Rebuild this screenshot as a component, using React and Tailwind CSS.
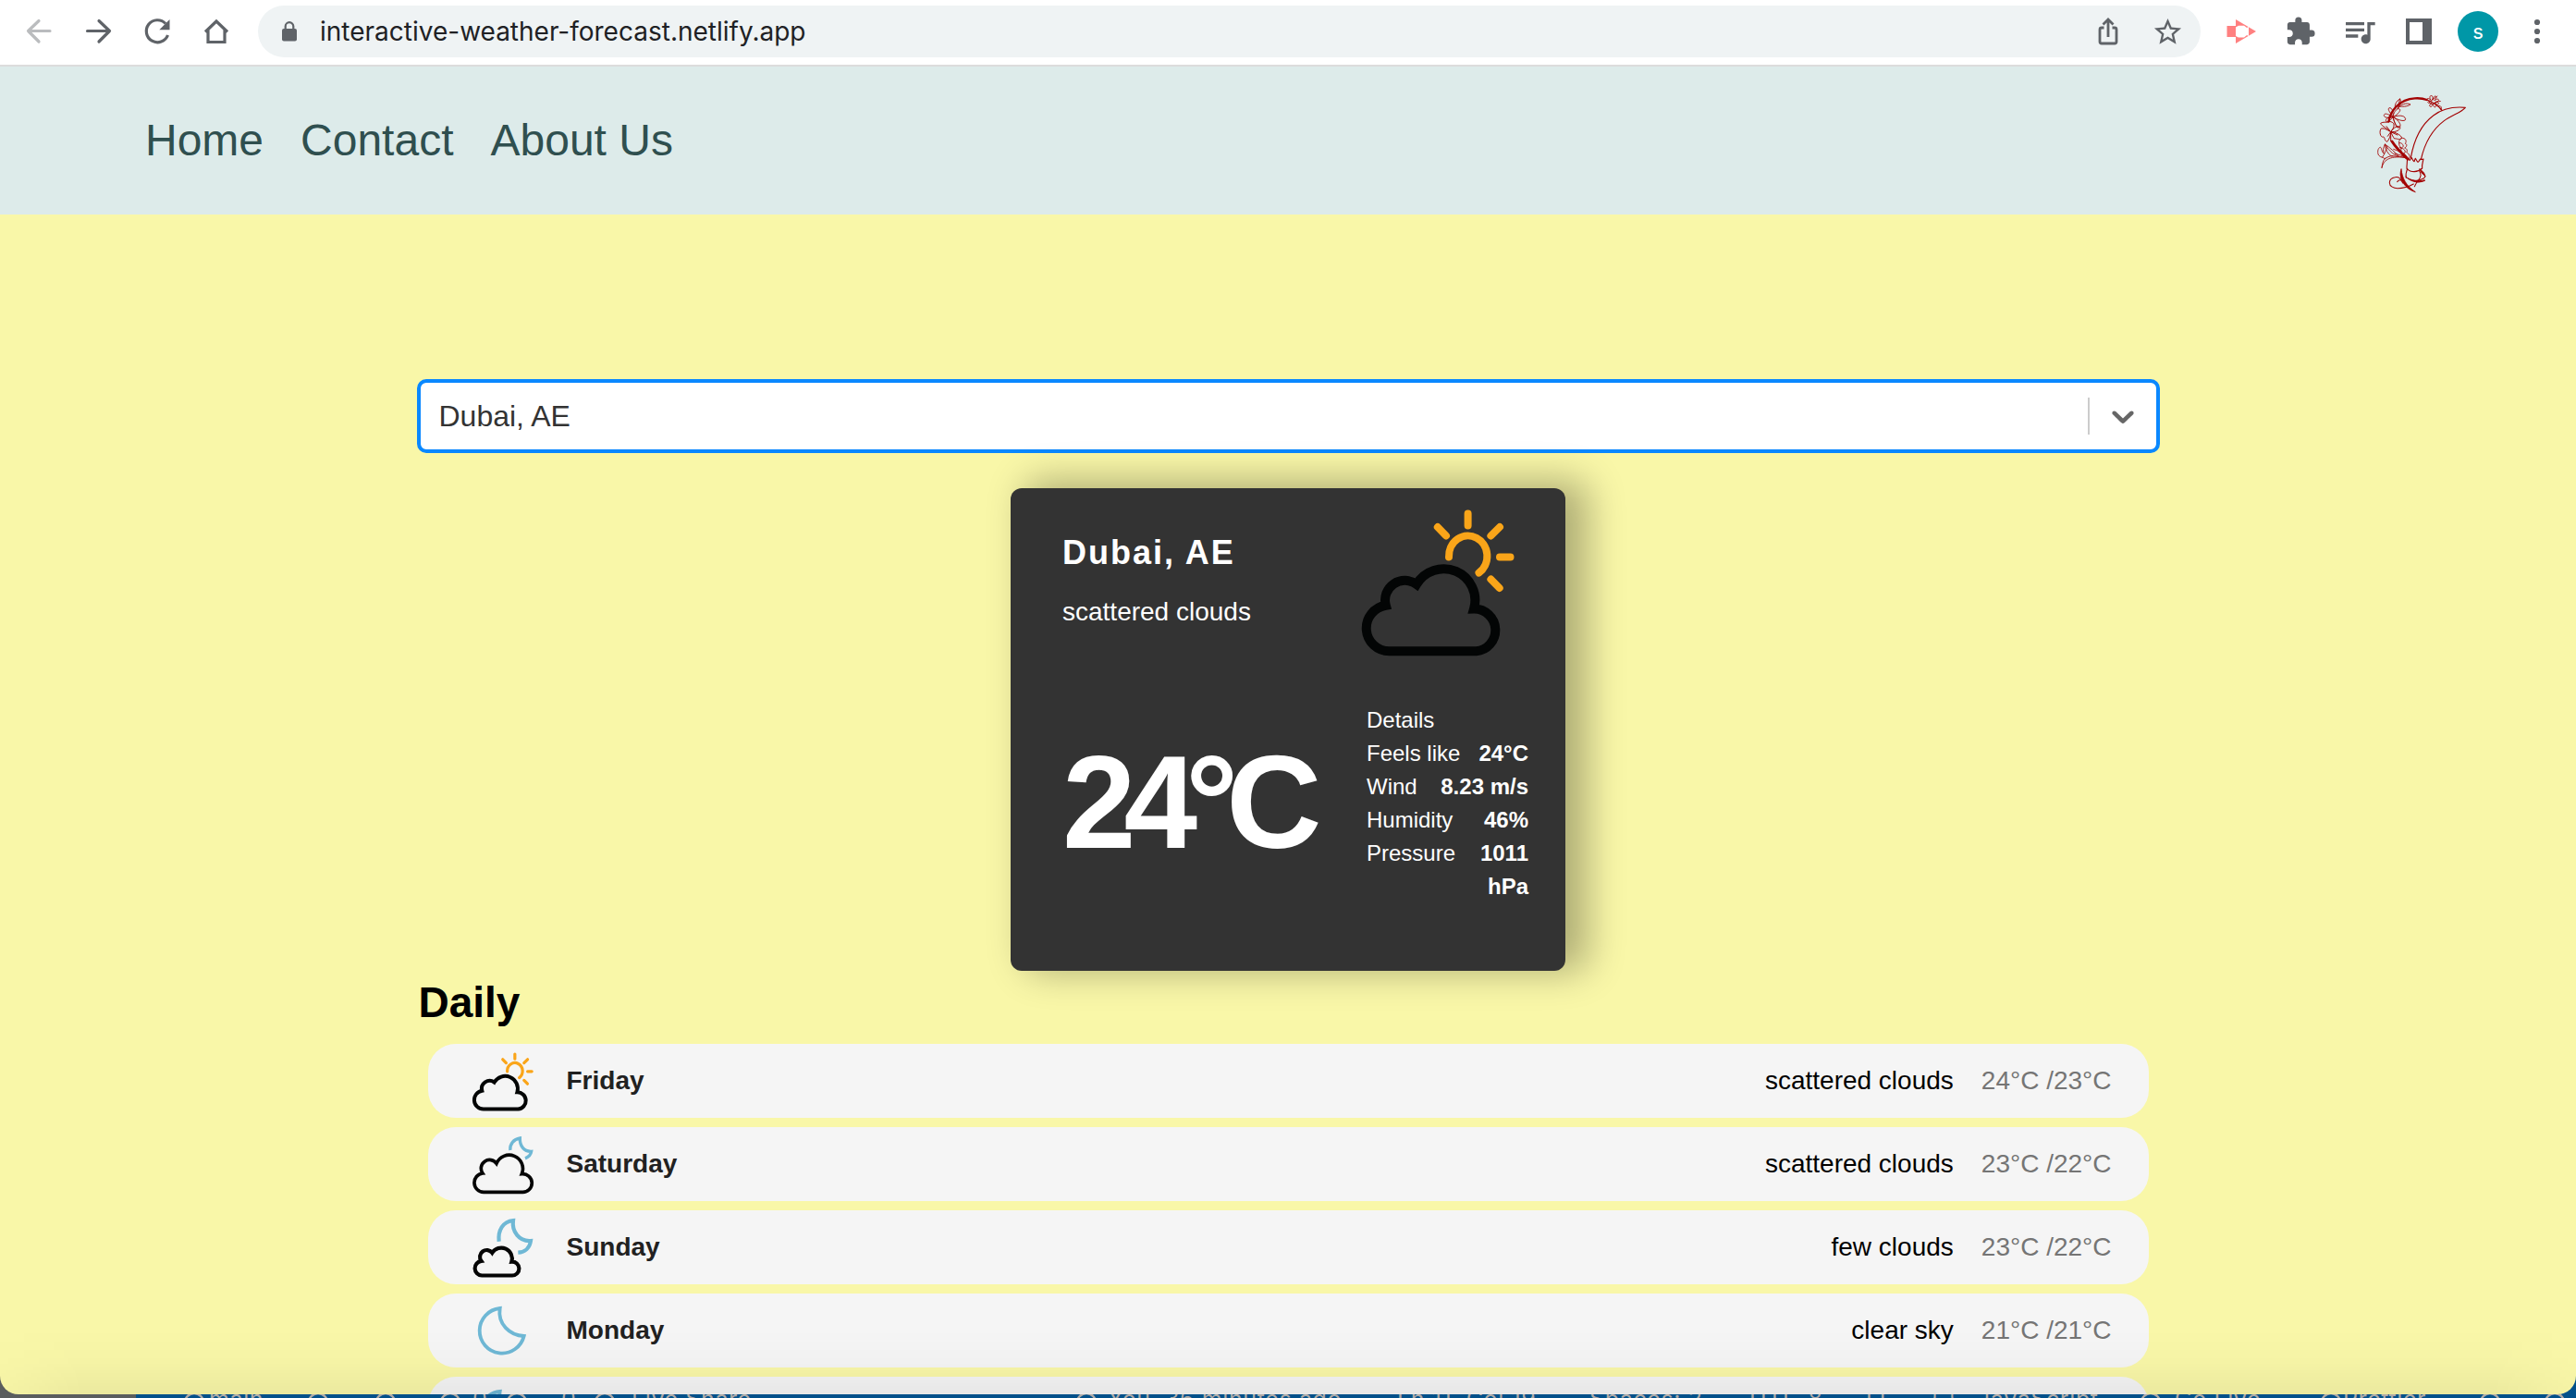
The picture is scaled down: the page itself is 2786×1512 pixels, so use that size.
import React from "react";
import { MdStarBorder, MdExtension, MdQueueMusic } from "react-icons/md";

const days = [
  { name: "Friday", icon: "sunCloud", desc: "scattered clouds", temp: "24°C /23°C" },
  { name: "Saturday", icon: "moonCloud", desc: "scattered clouds", temp: "23°C /22°C" },
  { name: "Sunday", icon: "moonFewClouds", desc: "few clouds", temp: "23°C /22°C" },
  { name: "Monday", icon: "moon", desc: "clear sky", temp: "21°C /21°C" },
];

function SunCloud({ className }) {
  return (
    <svg viewBox="373 28 200 200" className={className} fill="none">
      <g stroke="#faa519" strokeWidth="8" strokeLinecap="round">
        <path d="M487 102.5A20.700 22 0 1 1 519.500 119.500" />
        <path d="M507.600 55.500v13M542 70l-9.600 9.500M474.800 70l9.200 9.500M542 102.500H553.500M532.400 126.500l9.300 9.500" />
      </g>
      <path
        d="M422.500 204.300A24.900 24.900 0 0 1 418.800 154.800A21.300 21.300 0 0 1 452 132A34 34 0 0 1 514 158.600A22.900 22.900 0 0 1 516.500 204.300Z"
        stroke="#030505"
        strokeWidth="10"
      />
    </svg>
  );
}

function MoonCloud({ className }) {
  return (
    <svg viewBox="189 537 240 240" className={className} fill="none">
      <path d="M335.500 612C333.500 592 347 576 367 573C366 598 380 617 404 616C402.500 626 396 634 384 638.500" stroke="#6fb8d5" strokeWidth="10" />
      <path
        d="M249 748A30.600 30.600 0 0 1 246 687A27 27 0 0 1 291 655A44 44 0 0 1 373 689A29.600 29.600 0 1 1 375 748Z"
        stroke="#050505"
        strokeWidth="11"
      />
    </svg>
  );
}

function MoonFewClouds({ className }) {
  return (
    <svg viewBox="189 807 240 240" className={className} fill="none">
      <path d="M299 908C295 872 312 843 345 840C340 876 365 909 402 906C399 928 384 943 361 944" stroke="#6fb8d5" strokeWidth="12.500" />
      <path
        d="M243.500 1018.500A23.600 23.600 0 0 1 241.500 971.500A21 21 0 0 1 277 945A35 35 0 0 1 340 974A22.300 22.300 0 1 1 341 1018.500Z"
        stroke="#050505"
        strokeWidth="12.500"
      />
    </svg>
  );
}

function Moon({ className }) {
  return (
    <svg viewBox="189 1077 240 240" className={className} fill="none">
      <path d="M302 1125A73 73 0 1 0 380 1215C334 1213 294 1176 302 1125Z" stroke="#6fb8d5" strokeWidth="11.500" />
    </svg>
  );
}

const icons = { sunCloud: SunCloud, moonCloud: MoonCloud, moonFewClouds: MoonFewClouds, moon: Moon };

function FloralLogo() {
  return (
    <svg viewBox="0 0 480 420" className="h-[140px] w-[160px]" fill="none" stroke="#a30303" strokeLinecap="round" strokeLinejoin="round">
      <path strokeWidth="3.400" d="M202 272C212 215 235 165 275 135C305 112 345 106 379 109C366 125 335 133 310 152C270 182 246 228 235 278" />
      <path strokeWidth="7" d="M130 155C135 120 165 82 215 79C230 78 242 79 254 84" />
      <path strokeWidth="4" d="M254 84C275 92 293 104 303 118" />
      <path strokeWidth="8.500" d="M141 219C153 238 172 257 192 276" />
      <path strokeWidth="2.600" d="M252 84c4-8 10-4 14 0c-4-8-2-16 4-13c6 2 2 9 3 14c2-9 7-16 11-12c4 3-4 9-5 14c6-7 13-7 14-2c0 4-8 4-13 7c8-2 14 0 12 5c-3 5-9 0-14-2c5 4 8 9 4 12c-5 3-7-6-9-11c0 7-5 13-9 9c-4-3 3-8 5-12c-6 3-14 2-11-3c2-4 7-2 10-2M262 92c14-14 18-12 26-20M268 98c12 0 24-12 30-10M290 104c10-4 14 6 10 12" />
      <path strokeWidth="2.700" d="M152 114c-5-14 4-26 15-34c4 12 2 22-8 32c12-14 28-20 42-13c-12 8-26 7-38 6M160 112c4-10 3-20 6-30" />
      <path strokeWidth="2.700" d="M144 140c-12-8-27-16-29-6c-1 8 16 10 29 6c-16-2-26 6-22 14c6 4 16-6 22-14c-6-12-20-26-12-30c10-2 14 16 12 30c2-14 10-28 20-27c10 4-6 20-20 27c14-6 38-8 41 6c0 12-28 2-41-6c12 4 30 24 22 32c-10 5-18-18-22-32c4 14 10 36 18 35" />
      <path strokeWidth="2.900" d="M137 188c-8-10-30-18-33-28c8-6 20-2 24-4c4-4 16 0 19 6c2 10-4 18-10 26c8-14 24-22 30-16c4 8-14 18-30 16c14 0 34 10 36 20c-8 8-18 0-24 2c-4-4-8-14-12-22c0 10-4 24-12 32c-10-4-6-14-12-16c-10 4-14-18-8-26c6-4 20 2 32 10M137 188l-14-18M137 188l22 10M137 188l-10 14M137 188v30" />
      <path strokeWidth="2.600" d="M118 228c-5 10-8 24-2 32c-10-8-8-20-12-22c-10 0-11 20-6 26c6 8 14 4 20 12c6-6 14-10 26-10M118 228c16 10 34 28 46 40c-14-4-30-14-46-40c2 16 8 30 20 38c20 2 40 2 54 8M108 304c6-28 30-40 80-32M108 304c2-16 4-24 12-32M124 236c-2 14-8 24-14 34M146 244c16 4 34 16 44 28M150 258c14 4 28 8 40 16" />
      <path strokeWidth="2.600" d="M164 224c-2-10 6-16 12-16c12 2 12 12 8 18c8 2 4 12-2 14c8 2 10 10 6 14c8 4 14 14 8 22c-8-4-16-10-18-18c-10-4-8-14-6-18c-8-4-8-12-8-16c8-2 12 4 14 10c-4 8-10 8-12 4c6 4 14 2 18 14c-2 8-8 8-12 4c8 4 16 4 18 18c-8 0-12-6-16-12" />
      <path strokeWidth="3.400" d="M190 270c4 8 6 10 9 10c2-4 4-6 6-8c2 4 4 10 8 12c2-4 2-7 4-10c4 4 4 10 8 12c4-2 4-6 8-10c4 2 6 2 10 0c-2 10-6 20-4 30c-6 6-16 10-26 11c-10 0-18-4-24-10c-1-12 3-22 1-37z" />
      <path strokeWidth="3.200" d="M191 307c-4 10-6 20-4 30M230 315c6 10 6 16-2 28c-6 6-10 14-14 22" />
      <path fill="#a30303" strokeWidth="2.500" d="M171 309c3 30 16 54 46 74c-30-8-58-42-46-74z" />
      <path fill="#a30303" strokeWidth="2.500" d="M186 334c16 12 36 14 62 12c-22 10-46 4-62-12zM231 309c8 6 16 10 18 24c-6-8-14-10-18-24z" />
      <path strokeWidth="3.200" d="M249 332c-2 8-14 12-28 14M246 344c-12 10-24 6-32 4" />
      <path strokeWidth="3.200" d="M173 349c-4-10-12-16-22-14c-12 2-18 10-18 18c0 12 14 18 26 18c18 0 34-4 52-14M158 350c6-8 14-8 18 4" />
    </svg>
  );
}

function ToolIcon({ children, className = "" }) {
  return <div className={`flex h-10 w-10 shrink-0 items-center justify-center text-[#5f6368] ${className}`}>{children}</div>;
}

function BrowserBar() {
  return (
    <div className="flex h-[72px] items-start border-b-2 border-[#dcdcdc] bg-white pl-[22px] pt-[6px] font-[Inter,sans-serif]">
      <div className="flex h-14 w-[257px] items-center gap-6">
        <ToolIcon>
          <svg viewBox="0 0 40 40" className="size-10" fill="none" stroke="#babcbe" strokeWidth="3.2" strokeLinecap="round" strokeLinejoin="round">
            <path d="M32 19.500H9M20 8.500L8.500 19.500L20 31" />
          </svg>
        </ToolIcon>
        <ToolIcon>
          <svg viewBox="0 0 40 40" className="size-10" fill="none" stroke="#5f6368" strokeWidth="3.2" strokeLinecap="round" strokeLinejoin="round">
            <path d="M8.500 19.500H32M21 8.500L32.500 19.500L21 31" />
          </svg>
        </ToolIcon>
        <ToolIcon>
          <svg viewBox="0 0 40 40" className="size-10" fill="none">
            <path d="M31.500 24A12 12 0 1 1 29 11.500" stroke="#5f6368" strokeWidth="3.200" />
            <path d="M33.500 7V18.200H22.300Z" fill="#5f6368" />
          </svg>
        </ToolIcon>
        <ToolIcon>
          <svg viewBox="0 0 40 40" className="size-10" fill="none" stroke="#5f6368" strokeWidth="3.2">
            <path d="M8 20.500L20 9L32 20.500M11 18.500V31.500H29V18.500" />
          </svg>
        </ToolIcon>
      </div>
      <div className="flex h-14 w-[2101px] items-center rounded-full bg-[#eff3f4] pl-[25px] pr-4">
        <svg viewBox="0 0 18 22" className="h-[22px] w-[18px]">
          <rect x="1" y="8" width="16" height="13.500" rx="2" fill="#5f6368" />
          <path d="M4.700 9V5.500a4.300 4.300 0 0 1 8.600 0V9" fill="none" stroke="#5f6368" strokeWidth="2.200" />
        </svg>
        <span className="ml-[24px] flex-1 whitespace-nowrap text-[28px] text-[#202124]">interactive-weather-forecast.netlify.app</span>
        <ToolIcon className="mr-6">
          <svg viewBox="0 0 40 40" className="size-10" fill="none" stroke="#5f6368" strokeWidth="2.8">
            <path d="M15.500 16H13a2 2 0 0 0-2 2V31a2 2 0 0 0 2 2H27a2 2 0 0 0 2-2V18a2 2 0 0 0-2-2H24.500M20 26V8M14.500 12.500L20 7L25.500 12.500" />
          </svg>
        </ToolIcon>
        <ToolIcon>
          <MdStarBorder className="size-[35px]" />
        </ToolIcon>
      </div>
      <div className="ml-6 flex h-14 items-center gap-6">
        <ToolIcon>
          <svg viewBox="0 0 40 40" className="size-10">
            <path d="M4.500 14H14V7L36 20L14 33V26H4.500Z" fill="#ff8080" />
            <path d="M14 15.500L17 13.800H23L26 16L28 15V25L26 24L23 26.500H17L14 25Z" fill="#fff" />
          </svg>
        </ToolIcon>
        <ToolIcon>
          <MdExtension className="size-[34px]" />
        </ToolIcon>
        <ToolIcon>
          <MdQueueMusic className="size-10" />
        </ToolIcon>
        <ToolIcon>
          <div className="size-7 border-4 border-r-[10px] border-[#5f6368]" />
        </ToolIcon>
        <div className="-mx-0.5 flex size-11 items-center justify-center rounded-full bg-[#0097a7] text-[22px] text-white">s</div>
        <ToolIcon>
          <svg viewBox="0 0 40 40" className="size-10" fill="#5f6368">
            <circle cx="20" cy="10" r="3.100" />
            <circle cx="20" cy="20" r="3.100" />
            <circle cx="20" cy="30" r="3.100" />
          </svg>
        </ToolIcon>
      </div>
    </div>
  );
}

function NavBar() {
  return (
    <nav className="flex h-40 items-center justify-between bg-[#ddebea] pl-[157px] pr-[86px]">
      <div className="flex gap-10 text-[48px] text-[#2f4f4f]">
        <a>Home</a>
        <a>Contact</a>
        <a>About Us</a>
      </div>
      <div className="-mt-1">
        <FloralLogo />
      </div>
    </nav>
  );
}

function CitySelect() {
  return (
    <div className="flex h-20 w-full items-center rounded-[10px] border-4 border-[#0a88ff] bg-white pl-5">
      <span className="flex-1 text-[32px] text-[#333333]">Dubai, AE</span>
      <span className="h-10 w-0.5 bg-[#cccccc]" />
      <svg viewBox="0 0 20 20" className="mx-4 size-10" fill="#666666">
        <path d="M4.516 7.548c0.436-0.446 1.043-0.481 1.576 0l3.908 3.747 3.908-3.747c0.533-0.481 1.141-0.446 1.574 0 0.436 0.445 0.408 1.197 0 1.615-0.406 0.418-4.695 4.502-4.695 4.502-0.217 0.223-0.502 0.335-0.787 0.335s-0.57-0.112-0.789-0.335c0 0-4.287-4.084-4.695-4.502s-0.436-1.17 0-1.615z" />
      </svg>
    </div>
  );
}

function Detail({ label, value, narrow }) {
  return (
    <div className="flex justify-between">
      <span>{label}</span>
      <span className={narrow ? "w-[60px] text-right font-bold" : "text-right font-bold"}>{value}</span>
    </div>
  );
}

function CurrentWeather() {
  return (
    <section className="mx-auto mt-[38px] h-[522px] w-[600px] rounded-xl bg-[#333333] pl-14 pr-10 text-white shadow-[20px_-4px_40px_4px_rgba(0,0,0,0.3)]">
      <div className="flex h-[200px] justify-between">
        <div className="pt-[49px]">
          <p className="text-[36px] font-bold leading-[42px] tracking-[2px]">Dubai, AE</p>
          <p className="mt-[27px] text-[28px] leading-8">scattered clouds</p>
        </div>
        <SunCloud className="size-[200px]" />
      </div>
      <div className="flex justify-between">
        <p className="mt-[62px] text-[143px] font-bold leading-[156px] tracking-[-13px]">24°C</p>
        <div className="mt-[33px] w-[175px] text-[24px] leading-9">
          <p>Details</p>
          <Detail label="Feels like" value="24°C" />
          <Detail label="Wind" value="8.23 m/s" />
          <Detail label="Humidity" value="46%" />
          <Detail label="Pressure" value="1011 hPa" narrow />
        </div>
      </div>
    </section>
  );
}

function DayRow({ day }) {
  const Icon = icons[day.icon];
  return (
    <li className="flex h-20 shrink-0 items-center rounded-[30px] bg-[#f5f5f5] px-10 text-[28px]">
      <Icon className="size-20" />
      <span className="ml-[30px] flex-1 font-bold text-[#212121]">{day.name}</span>
      <span className="mr-[30px] text-black">{day.desc}</span>
      <span className="text-[#757575]">{day.temp}</span>
    </li>
  );
}

function Status({ className, children }) {
  return <span className={`shrink-0 whitespace-nowrap ${className}`}>{children}</span>;
}

function StatusIcon({ className }) {
  return (
    <span className={`shrink-0 ${className}`}>
      <svg viewBox="0 0 24 24" className="size-6" fill="none" stroke="currentColor" strokeWidth="2.5">
        <circle cx="12" cy="16" r="10" />
      </svg>
    </span>
  );
}

function EditorStatusBar() {
  return (
    <div className="h-1 overflow-hidden">
      <div className="-mt-[11px] flex h-8 items-center pl-[198px] font-[Inter,sans-serif] text-[25px] leading-8 tracking-[0.6px] text-[#b0aba8]">
        <StatusIcon className="w-7" />
        <Status className="w-[106px]">main</Status>
        <StatusIcon className="w-[73px]" />
        <StatusIcon className="w-[70px]" />
        <StatusIcon className="w-9" />
        <Status className="w-9">0</Status>
        <StatusIcon className="w-[60px]" />
        <Status className="w-[35px]">0</Status>
        <StatusIcon className="w-[41px]" />
        <Status className="w-[480px]">Live Share</Status>
        <StatusIcon className="w-[35px]" />
        <Status className="w-[313px]">You, 36 minutes ago</Status>
        <Status className="w-[208px]">Ln 11, Col 19</Status>
        <Status className="w-[173px]">Spaces: 2</Status>
        <Status className="w-[126px]">UTF-8</Status>
        <Status className="w-[69px]">LF</Status>
        <Status className="w-[51px]">{"{ }"}</Status>
        <Status className="w-[176px]">JavaScript</Status>
        <StatusIcon className="w-[38px]" />
        <Status className="w-[157px]">Go Live</Status>
        <StatusIcon className="w-[25px]" />
        <Status className="w-[147px]">Prettier</Status>
        <StatusIcon className="w-[70px]" />
        <StatusIcon className="w-6" />
      </div>
    </div>
  );
}

export default function App() {
  return (
    <div className="h-[1512px] w-[2786px] overflow-hidden bg-[linear-gradient(90deg,#5a5d5e_147px,#01508a_147px)] font-['Liberation_Sans',Arial,sans-serif]">
      <div className="relative h-[1508px] overflow-hidden rounded-b-[20px] bg-[#f9f7a8]">
        <BrowserBar />
        <NavBar />
        <main className="mx-auto w-[1885px] pt-[178px]">
          <CitySelect />
          <CurrentWeather />
          <h2 className="h-[79px] pl-0.5 pt-2 text-[46px] font-bold leading-[52px] text-black">Daily</h2>
          <ul className="mx-3 flex flex-col gap-[10px]">
            {days.map((day) => (
              <DayRow key={day.name} day={day} />
            ))}
            <li className="h-20 rounded-[30px] bg-[#f5f5f5] px-10">
              <Moon className="size-20" />
            </li>
          </ul>
        </main>
        <div className="pointer-events-none absolute inset-x-0 bottom-0 h-[70px] bg-[linear-gradient(180deg,transparent,rgba(0,0,0,0.015)_50%,rgba(0,0,0,0.055))] [mask-image:linear-gradient(90deg,rgba(0,0,0,0.3),black_90px,black_2696px,rgba(0,0,0,0.3))]" />
      </div>
      <EditorStatusBar />
    </div>
  );
}
